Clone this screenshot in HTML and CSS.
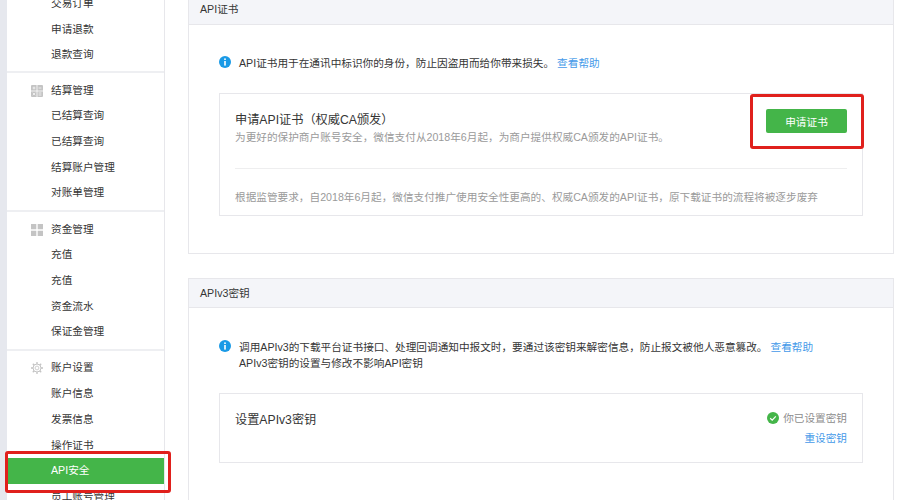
FILE: index.html
```html
<!DOCTYPE html>
<html lang="zh-CN">
<head>
  <meta charset="UTF-8" />
  <title>API安全</title>
  <link rel="stylesheet" href="styles.css">
</head>
<body>
  <div class="page">
    <!-- Left menu -->
    <div class="sidebar">
      <div class="group first">
        <a class="item">交易订单</a>
        <a class="item">申请退款</a>
        <a class="item">退款查询</a>
      </div>
      <div class="group">
        <a class="item head">
          <svg class="icon" viewBox="0 0 12 12"><rect width="12" height="12" rx="1" fill="#c4c4c4"/><path d="M0 6h12M6 0v12" stroke="#fff" stroke-width=".8"/><path d="M1.6 3h2.8M3 1.6v2.8M7.6 3h2.8M1.8 7.8l2.4 2.4M4.2 7.8l-2.4 2.4M7.6 8h2.8M7.6 10h2.8" stroke="#fff" stroke-width=".7"/></svg>
          结算管理
        </a>
        <a class="item">已结算查询</a>
        <a class="item">已结算查询</a>
        <a class="item">结算账户管理</a>
        <a class="item">对账单管理</a>
      </div>
      <div class="group">
        <a class="item head">
          <svg class="icon" viewBox="0 0 12 12"><path d="M0 0h5.3v5.3H0zM6.7 0H12v5.3H6.7zM0 6.7h5.3V12H0zM6.7 6.7H12V12H6.7z" fill="#c4c4c4"/></svg>
          资金管理
        </a>
        <a class="item">充值</a>
        <a class="item">充值</a>
        <a class="item">资金流水</a>
        <a class="item">保证金管理</a>
      </div>
      <div class="group">
        <a class="item head">
          <svg class="icon" viewBox="0 0 12 12"><circle cx="6" cy="6" r="4" fill="none" stroke="#c4c4c4" stroke-width="1"/><circle cx="6" cy="6" r="1.9" fill="none" stroke="#c4c4c4" stroke-width=".8"/><path d="M6 0v2M6 10v2M0 6h2M10 6h2M1.8 1.8l1.4 1.4M8.8 8.8l1.4 1.4M1.8 10.2l1.4-1.4M8.8 3.2l1.4-1.4" stroke="#c4c4c4" stroke-width="1.3"/></svg>
          账户设置
        </a>
        <a class="item">账户信息</a>
        <a class="item">发票信息</a>
        <a class="item">操作证书</a>
        <a class="item current">API安全</a>
        <a class="item">员工账号管理</a>
      </div>
      <div class="mark mark-menu"></div>
    </div>

    <!-- Main content -->
    <div class="main">
      <div class="card card-cert">
        <div class="card-head">API证书</div>
        <div class="card-body">
          <div class="notice">
            <svg class="info" viewBox="0 0 12 12"><circle cx="6" cy="6" r="6" fill="#1a9ae6"/><rect x="5.2" y="2.4" width="1.6" height="1.6" fill="#fff"/><rect x="5.2" y="5" width="1.6" height="4.6" fill="#fff"/></svg>
            <p>API证书用于在通讯中标识你的身份，防止因盗用而给你带来损失。<a class="link help">查看帮助</a></p>
          </div>
          <div class="box box-cert">
            <div class="box-top">
              <div>
                <h3>申请API证书（权威CA颁发）</h3>
                <p class="desc">为更好的保护商户账号安全，微信支付从2018年6月起，为商户提供权威CA颁发的API证书。</p>
              </div>
              <button>申请证书</button>
            </div>
            <p class="desc foot">根据监管要求，自2018年6月起，微信支付推广使用安全性更高的、权威CA颁发的API证书，原下载证书的流程将被逐步废弃</p>
            <div class="mark mark-btn"></div>
          </div>
        </div>
      </div>

      <div class="card">
        <div class="card-head">APIv3密钥</div>
        <div class="card-body">
          <div class="notice">
            <svg class="info" viewBox="0 0 12 12"><circle cx="6" cy="6" r="6" fill="#1a9ae6"/><rect x="5.2" y="2.4" width="1.6" height="1.6" fill="#fff"/><rect x="5.2" y="5" width="1.6" height="4.6" fill="#fff"/></svg>
            <p>调用APIv3的下载平台证书接口、处理回调通知中报文时，要通过该密钥来解密信息，防止报文被他人恶意篡改。<a class="link help">查看帮助</a><br>APIv3密钥的设置与修改不影响API密钥</p>
          </div>
          <div class="box box-key">
            <h3>设置APIv3密钥</h3>
            <div class="status">
              <div class="status-line">
                <svg class="check" viewBox="0 0 12 12"><circle cx="6" cy="6" r="6" fill="#44b549"/><path d="M3.2 6.2l2 1.9 3.6-3.7" fill="none" stroke="#fff" stroke-width="1.2"/></svg>
                你已设置密钥
              </div>
              <a class="link">重设密钥</a>
            </div>
          </div>
        </div>
      </div>
    </div>
  </div>
</body>
</html>
```

FILE: styles.css
```css
html, body {
  margin: 0;
  padding: 0;
  height: 500px;
  overflow: hidden;
  background: white;
}
body {
  font-family: "Liberation Sans", "Noto Sans CJK SC", sans-serif;
  font-size: 10.65px;
  color: #353535;
}
.page {
  display: flex;
  height: 500px;
  overflow: hidden;
}
p, h3 {
  margin: 0;
}

/* left menu */
.sidebar {
  position: relative;
  width: 157px;
  flex: none;
  margin-left: 7px;
  margin-top: -9px;
  height: 509px;
  border-right: 1px solid #e7e7eb;
  box-shadow: -7px 0 0 #e6e8ee;
}
.group {
  padding: 4.5px 0 4px;
  border-top: 2px solid #eeeff2;
}
.group.first {
  padding: 0 0 3px;
  border-top: none;
}
.item {
  position: relative;
  display: block;
  height: 25.7px;
  line-height: 25.7px;
  padding-left: 44px;
  white-space: nowrap;
}
.icon {
  position: absolute;
  left: 24px;
  top: 7px;
  width: 12px;
  height: 12px;
}
.item.current {
  background: #44b549;
  color: white;
}
.mark {
  position: absolute;
  border: 3px solid #e0201c;
  border-radius: 3px;
  box-sizing: border-box;
}
.mark-menu {
  left: -2px;
  top: 460px;
  width: 166px;
  height: 42px;
}

/* main */
.main {
  flex: 1;
  padding: 0 6px 0 23px;
  min-width: 0;
}
.card {
  border: 1px solid #e7e7eb;
}
.card-cert {
  border-top: none;
  height: 254px;
  box-sizing: border-box;
  margin-bottom: 24px;
}
.card-head {
  height: 24px;
  line-height: 19px;
  padding-left: 11px;
  background: #f4f5f9;
  border-bottom: 1px solid #e7e7eb;
}
.card + .card .card-head {
  height: 28px;
  line-height: 28px;
}
.card-body {
  padding: 30px 30px 38px;
}
.card + .card .card-body {
  height: 200px;
  padding-top: 31px;
}
.notice {
  display: flex;
  gap: 8px;
  line-height: 16px;
}
.info {
  width: 12px;
  height: 12px;
  flex: none;
  margin-top: 1px;
}
.link {
  color: #459ae9;
}
.help {
  margin-left: 3px;
}
.box {
  position: relative;
  border: 1px solid #e7e7eb;
  box-sizing: border-box;
  width: 644px;
  padding: 0 15px;
}
.box-cert {
  margin-top: 22px;
  height: 123px;
}
.box-top {
  display: flex;
  justify-content: space-between;
  height: 74px;
  border-bottom: 1px solid #eeeeef;
}
.box-top h3 {
  font-size: 12.2px;
  font-weight: normal;
  line-height: 16px;
  margin-top: 18px;
}
.desc {
  color: #9a9a9a;
  line-height: 16px;
  margin-top: 1px;
}
.foot {
  margin-top: 20px;
}
button {
  width: 81px;
  height: 24px;
  margin-top: 15px;
  background: #44b549;
  color: white;
  border: none;
  border-radius: 2px;
  font: inherit;
  padding: 0;
}
.mark-btn {
  left: 530px;
  top: 0;
  width: 114px;
  height: 55px;
}
.box-key {
  margin-top: 22px;
  height: 70px;
  display: flex;
  justify-content: space-between;
}
.box-key h3 {
  font-size: 12.2px;
  font-weight: normal;
  line-height: 16px;
  margin-top: 18px;
}
.status {
  margin-top: 14px;
  text-align: right;
  line-height: 20px;
}
.status-line {
  display: flex;
  align-items: center;
  justify-content: flex-end;
  gap: 4px;
  color: #8d8d8d;
}
.check {
  width: 12px;
  height: 12px;
}
```
